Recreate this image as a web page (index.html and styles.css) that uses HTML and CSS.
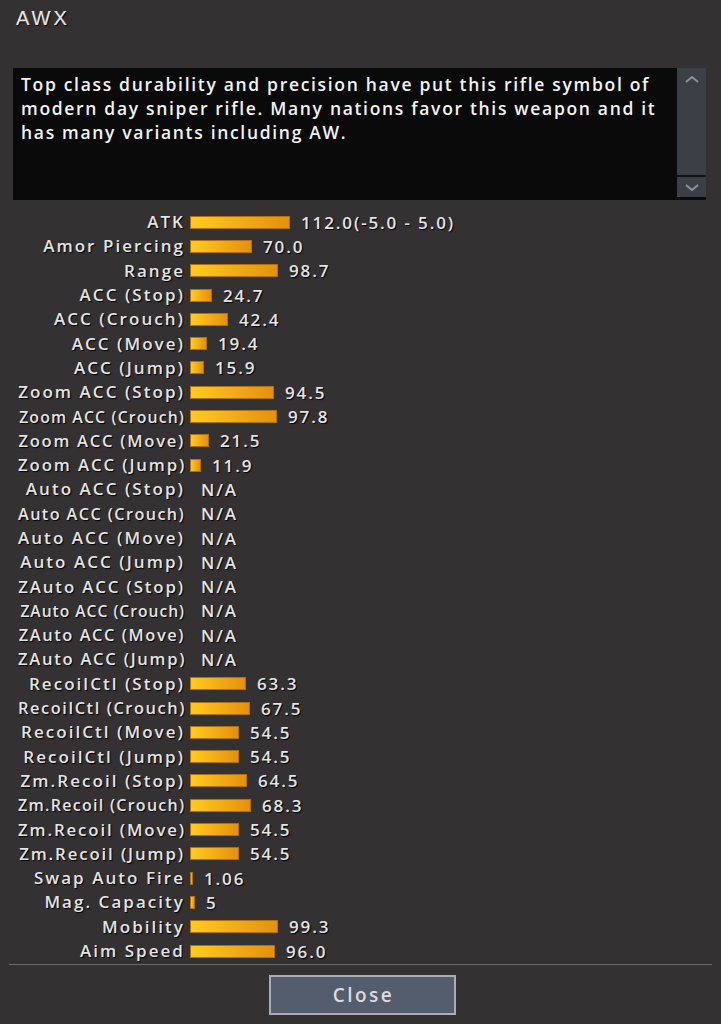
FILE: index.html
```html
<!DOCTYPE html>
<html>
<head>
<meta charset="utf-8">
<link rel="stylesheet" href="styles.css">
</head>
<body>
<div class="win">
  <div class="title">AWX</div>
  <div class="desc">
    <div class="desc-text">Top class durability and precision have put this rifle symbol of modern day sniper rifle. Many nations favor this weapon and it has many variants including AW.</div>
    <div class="scroll">
      <div class="sb-up"><svg width="18" height="10" viewBox="0 0 18 10"><path d="M3 8 L9 3 L15 8" fill="none" stroke="#8d9399" stroke-width="2"/></svg></div>
      <div class="sb-track"></div>
      <div class="sb-down"><svg width="18" height="10" viewBox="0 0 18 10"><path d="M3 3 L9 8 L15 3" fill="none" stroke="#8d9399" stroke-width="2"/></svg></div>
    </div>
  </div>
  <div class="stats" id="stats"></div>
  <div class="footer">
    <button class="close">Close</button>
  </div>
</div>
<script src="app.js"></script>
</body>
</html>
```
FILE: styles.css
```css
html, body {
  margin: 0;
  padding: 0;
}
body {
  background: #333132;
  width: 721px;
  height: 1024px;
  overflow: hidden;
  font-family: "Open Sans", "Noto Sans", sans-serif;
}
.win {
  display: flex;
  flex-direction: column;
  height: 1024px;
}
.title {
  font-family: "Liberation Sans", Arial, sans-serif;
  font-size: 20px;
  letter-spacing: 3px;
  color: #e6e6e6;
  text-shadow: 1px 1px 1px #000, 0.4px 0 0 #e6e6e6;
  padding: 7px 0 0 16px;
  height: 60px;
  box-sizing: border-box;
  line-height: 22px;
}
.desc {
  margin: 8px 15px 0 13px;
  height: 132px;
  background: #0a0a0a;
  display: flex;
}
.desc-text {
  flex: 1;
  padding: 4px 0 0 8px;
  font-size: 17.5px;
  font-weight: 600;
  letter-spacing: 0.096em;
  line-height: 24px;
  color: #f2f2f2;
}
.scroll {
  width: 29px;
  height: 129px;
  background: #3b4046;
  display: flex;
  flex-direction: column;
}
.sb-up {
  height: 22px;
  display: flex;
  justify-content: center;
  align-items: center;
}
.sb-track {
  flex: 1;
  border-bottom: 2px solid #101214;
}
.sb-down {
  height: 20px;
  display: flex;
  justify-content: center;
  align-items: center;
}
.stats {
  margin-top: 10px;
  height: 754px;
  overflow: hidden;
}
.row {
  display: flex;
  align-items: center;
  height: 24.3px;
}
.label {
  width: 167px;
  margin-left: 18px;
  text-align: right;
  white-space: nowrap;
  font-size: 17px;
  font-weight: 600;
  letter-spacing: 0.12em;
  color: #e4e4e4;
  text-shadow: 1px 1px 1px #000;
  line-height: 20px;
}
.bar {
  margin-left: 5px;
  height: 11px;
  box-sizing: content-box;
  border: 1px solid #b0700c;
  background: linear-gradient(to right, #ffcb1f, #e5900f);
}
.bar.none {
  border: none;
}
.value {
  margin-left: 11px;
  font-size: 17px;
  font-weight: 600;
  color: #e4e4e4;
  text-shadow: 1px 1px 1px #000;
  white-space: nowrap;
  letter-spacing: 0.11em;
}
.footer {
  margin: 0 9px;
  border-top: 1px solid #6b6b6b;
  display: flex;
  justify-content: center;
  padding: 10px 0 0 4px;
}
.close {
  width: 187px;
  height: 40px;
  background: #545d6d;
  border: 2px solid #a9adb4;
  color: #dcdcdc;
  font-family: "Open Sans", "Noto Sans", sans-serif;
  font-size: 19px;
  font-weight: 600;
  letter-spacing: 0.13em;
  padding: 0 0 0 2px;
}
```
FILE: app.js
```js
var data = [
  ["ATK", 112.0, "112.0(-5.0 - 5.0)"],
  ["Amor Piercing", 70.0, "70.0"],
  ["Range", 98.7, "98.7"],
  ["ACC (Stop)", 24.7, "24.7"],
  ["ACC (Crouch)", 42.4, "42.4"],
  ["ACC (Move)", 19.4, "19.4"],
  ["ACC (Jump)", 15.9, "15.9"],
  ["Zoom ACC (Stop)", 94.5, "94.5"],
  ["Zoom ACC (Crouch)", 97.8, "97.8"],
  ["Zoom ACC (Move)", 21.5, "21.5"],
  ["Zoom ACC (Jump)", 11.9, "11.9"],
  ["Auto ACC (Stop)", 0, "N/A"],
  ["Auto ACC (Crouch)", 0, "N/A"],
  ["Auto ACC (Move)", 0, "N/A"],
  ["Auto ACC (Jump)", 0, "N/A"],
  ["ZAuto ACC (Stop)", 0, "N/A"],
  ["ZAuto ACC (Crouch)", 0, "N/A"],
  ["ZAuto ACC (Move)", 0, "N/A"],
  ["ZAuto ACC (Jump)", 0, "N/A"],
  ["RecoilCtl (Stop)", 63.3, "63.3"],
  ["RecoilCtl (Crouch)", 67.5, "67.5"],
  ["RecoilCtl (Move)", 54.5, "54.5"],
  ["RecoilCtl (Jump)", 54.5, "54.5"],
  ["Zm.Recoil (Stop)", 64.5, "64.5"],
  ["Zm.Recoil (Crouch)", 68.3, "68.3"],
  ["Zm.Recoil (Move)", 54.5, "54.5"],
  ["Zm.Recoil (Jump)", 54.5, "54.5"],
  ["Swap Auto Fire", 1.06, "1.06", 1],
  ["Mag. Capacity", 5, "5", 3],
  ["Mobility", 99.3, "99.3"],
  ["Aim Speed", 96.0, "96.0"]
];
var stats = document.getElementById("stats");
data.forEach(function (d) {
  var row = document.createElement("div");
  row.className = "row";
  var label = document.createElement("div");
  label.className = "label";
  label.textContent = d[0];
  var bar = document.createElement("div");
  bar.className = "bar";
  var w;
  if (d[2] === "N/A") { w = 0; bar.className += " none"; }
  else if (d[3] !== undefined) { w = d[3]; }
  else { w = Math.round(d[1] * 0.89) - 2; }
  bar.style.width = w + "px";
  var val = document.createElement("div");
  val.className = "value";
  val.textContent = d[2];
  row.appendChild(label);
  row.appendChild(bar);
  row.appendChild(val);
  stats.appendChild(row);
  var size = 17, ls = 0.12;
  while (label.scrollWidth > 168 && size > 10) {
    size -= 0.2;
    ls = Math.max(0.03, ls - 0.008);
    label.style.fontSize = size + "px";
    label.style.letterSpacing = ls + "em";
  }
});
```
